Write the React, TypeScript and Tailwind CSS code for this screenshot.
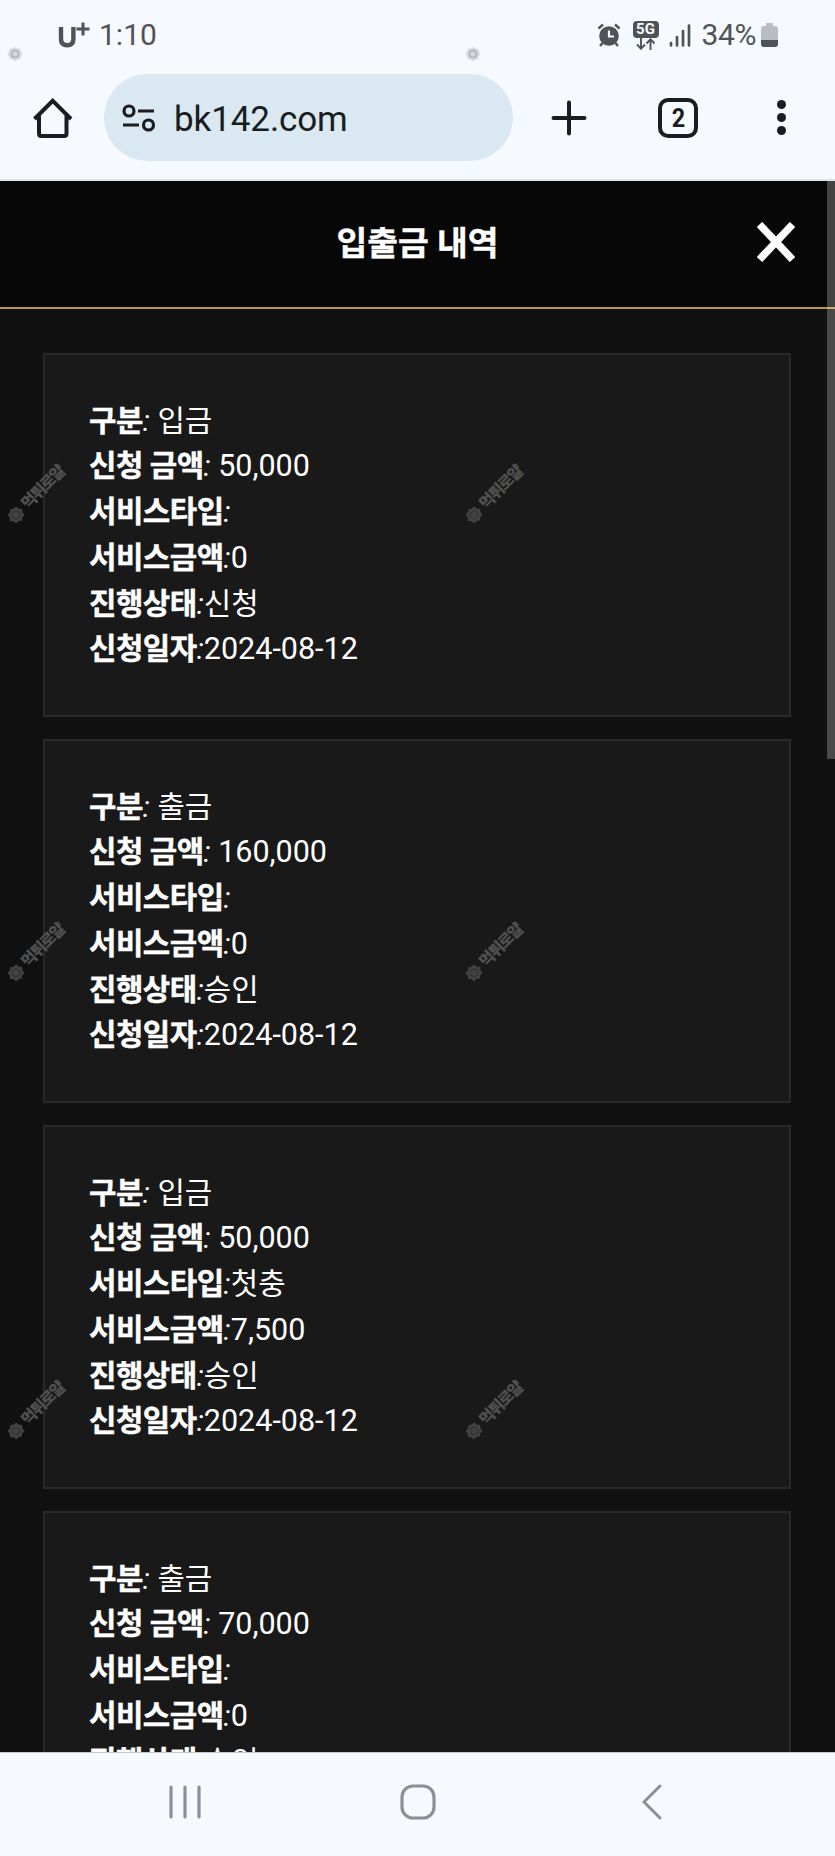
type Record = {
  kind: string;
  amount: string;
  bonusType: string;
  bonusAmount: string;
  status: string;
  date: string;
};

const records: Record[] = [
  { kind: "입금", amount: "50,000", bonusType: "", bonusAmount: "0", status: "신청", date: "2024-08-12" },
  { kind: "출금", amount: "160,000", bonusType: "", bonusAmount: "0", status: "승인", date: "2024-08-12" },
  { kind: "입금", amount: "50,000", bonusType: "첫충", bonusAmount: "7,500", status: "승인", date: "2024-08-12" },
  { kind: "출금", amount: "70,000", bonusType: "", bonusAmount: "0", status: "승인", date: "2024-08-12" },
];

const stamps = [
  "left-[-2px] top-[477px]",
  "left-[456px] top-[477px]",
  "left-[-2px] top-[935px]",
  "left-[456px] top-[935px]",
  "left-[-2px] top-[1393px]",
  "left-[456px] top-[1393px]",
];

function Badge({ className }: { className: string }) {
  return (
    <svg viewBox="0 0 18 18" className={className}>
      <path d="M9 1l2.500 1.800 3.500.2.300 3.300L17.500 9l-2.200 2.700-.3 3.300-3.500.2L9 17l-2.500-1.800L3 15l-.3-3.300L.5 9l2.200-2.700L3 3l3.500-.2z" fill="currentColor" />
      <circle cx="9" cy="9" r="3.800" fill="none" stroke="black" strokeOpacity="0.2" strokeWidth="1.400" />
    </svg>
  );
}

function StatusBar() {
  return (
    <div className="flex h-[70px] items-center justify-between pr-[57px] pl-[58px] text-[#505356]">
      <div className="flex items-center gap-[9px]">
        <svg viewBox="0 0 32 26" className="h-[26px] w-8" fill="none" stroke="currentColor">
          <path d="M3 5v12c0 4 2 6.300 6.200 6.300s6.200-2.300 6.200-6.300V5" strokeWidth="4.400" />
          <path d="M18.500 7h13M25 .5v13" strokeWidth="3" />
        </svg>
        <span className="text-[30px] leading-none">1:10</span>
      </div>
      <div className="flex items-center">
        <svg viewBox="0 0 24 24" className="mr-[12px] h-6 w-6">
          <circle cx="12" cy="13" r="9.800" fill="currentColor" />
          <path d="M1.500 5.500l4.500-4M22.500 5.500l-4.500-4M5.500 20l-2.500 3M18.500 20l2.500 3" stroke="currentColor" strokeWidth="2.400" />
          <path d="M12 7.500v6h5" fill="none" stroke="#f6f9fe" strokeWidth="2.200" />
        </svg>
        <div className="mr-[10px] flex w-[26px] flex-col items-center">
          <span className="h-[17px] w-[26px] rounded-[4px] bg-[#505356] text-center text-[15px] leading-[17px] font-bold text-[#f6f9fe]">5G</span>
          <svg viewBox="0 0 20 12" className="h-3 w-5" fill="none" stroke="currentColor" strokeWidth="1.900">
            <path d="M5 0v10.500M1 6.500l4 4.200 4-4.200M14.500 12V1.500M10.500 5.500l4-4.200 4 4.200" />
          </svg>
        </div>
        <svg viewBox="0 0 22 23" className="mr-[11px] h-[23px] w-[22px]" fill="none" stroke="currentColor" strokeWidth="2.700" strokeLinecap="round">
          <path d="M2 19v2.500M8 13v8.500M14 7v14.500M20 1.500v20" />
        </svg>
        <span className="text-[30px] leading-none tracking-[-0.4px]">34%</span>
        <svg viewBox="0 0 17 24" className="ml-[5px] h-6 w-[17px]">
          <path d="M5 0h7v3h2q3 0 3 3v11H0V6q0-3 3-3h2z" fill="#b9bcc1" />
          <path d="M0 17h17v4q0 3-3 3H3q-3 0-3-3z" fill="currentColor" />
        </svg>
      </div>
    </div>
  );
}

function AddressBar() {
  return (
    <div className="flex h-[95px] items-center text-[#191d20]">
      <svg viewBox="0 0 40 40" className="ml-[33px] h-10 w-10" fill="none" stroke="currentColor" strokeWidth="4" strokeLinejoin="miter">
        <path d="M1.500 21L19.700 2.800 38 21" />
        <path d="M6 17.500v18q0 2.500 2.500 2.500h22.500q2.500 0 2.500-2.500v-18" />
      </svg>
      <div className="ml-[31px] flex h-[87px] w-[409px] items-center rounded-full bg-[#dae8f1] pl-[18px]">
        <svg viewBox="0 0 34 28" className="h-7 w-[34px]" fill="none" stroke="currentColor" strokeWidth="3.200">
          <circle cx="7" cy="7" r="5" />
          <path d="M16 7h16M1 21h16" />
          <circle cx="26.500" cy="21" r="5" />
        </svg>
        <span className="ml-[18px] pt-[3px] text-[35px] leading-none tracking-[-0.1px]">bk142.com</span>
      </div>
      <svg viewBox="0 0 36 36" className="ml-[38px] h-9 w-9" fill="none" stroke="currentColor" strokeWidth="4" strokeLinecap="round">
        <path d="M18 2.500v31M2.500 18h31" />
      </svg>
      <div className="ml-[71px] flex h-10 w-10 items-center justify-center rounded-[10px] border-4 border-current text-[26px] leading-none font-bold">
        <span className="scale-x-90">2</span>
      </div>
      <div className="ml-[79px] flex flex-col gap-1">
        <i className="size-[9px] rounded-full bg-current" />
        <i className="size-[9px] rounded-full bg-current" />
        <i className="size-[9px] rounded-full bg-current" />
      </div>
    </div>
  );
}

function Row({ label, text, number, spaced }: { label: string; text?: string; number?: string; spaced?: boolean }) {
  return (
    <p className="h-[45.8px] whitespace-pre">
      <b className="font-bold tracking-[-0.5px] [-webkit-text-stroke:0.4px_white]">{label}</b>
      <i>:</i>
      {spaced ? " " : ""}
      {text}
      {number && <span className="text-[30.5px]">{number}</span>}
    </p>
  );
}

function RecordCard({ record }: { record: Record }) {
  return (
    <div className="h-[364px] shrink-0 border-2 border-[#292929] bg-[#191919] px-[44px] pt-[42.5px] text-[29.8px] leading-[45.8px] text-white">
      <Row label="구분" text={record.kind} spaced />
      <Row label="신청 금액" number={record.amount} spaced />
      <Row label="서비스타입" text={record.bonusType} />
      <Row label="서비스금액" number={record.bonusAmount} />
      <Row label="진행상태" text={record.status} />
      <Row label="신청일자" number={record.date} />
    </div>
  );
}

export default function App() {
  return (
    <div className="relative flex h-[1856px] w-[835px] flex-col overflow-hidden bg-[#f6f9fe] font-[Roboto,'Noto_Sans_CJK_KR',sans-serif]">
      <header className="h-[181px] shrink-0 border-b-2 border-[#dde3e6]">
        <StatusBar />
        <AddressBar />
      </header>

      <main className="relative h-[1571px] shrink-0 overflow-hidden bg-[#111]">
        <div className="relative flex h-[128px] items-center justify-center border-b-2 border-[#b8974a] bg-[#070707]">
          <h1 className="text-[33.4px] leading-none font-bold text-white [-webkit-text-stroke:0.4px_white]">입출금 내역</h1>
          <svg viewBox="0 0 38 40" className="absolute top-[41px] right-[40px] h-10 w-[38px]" stroke="white" strokeWidth="7.500">
            <path d="M2.500 2.500l33 35M35.500 2.500l-33 35" />
          </svg>
        </div>
        <div className="flex flex-col gap-[22px] pt-[44px] pr-[44px] pl-[43px]">
          {records.map((record, i) => (
            <RecordCard key={i} record={record} />
          ))}
        </div>
        <div className="absolute top-0 right-0 h-[578px] w-2 bg-white/24" />
      </main>

      <nav className="flex h-[104px] items-center border-t border-[#c4c6ca] pb-[5px] text-[#8d9093]">
        <svg viewBox="0 0 32 34" className="ml-[169px] h-[34px] w-8" fill="none" stroke="currentColor" strokeWidth="3.200" strokeLinecap="round">
          <path d="M2 2v30M16 2v30M30 2v30" />
        </svg>
        <svg viewBox="0 0 36 36" className="ml-[199px] h-9 w-9" fill="none" stroke="currentColor" strokeWidth="3.200">
          <rect x="2" y="2" width="32" height="32" rx="11" />
        </svg>
        <svg viewBox="0 0 22 36" className="ml-[205px] h-9 w-[22px]" fill="none" stroke="currentColor" strokeWidth="3" strokeLinecap="round" strokeLinejoin="round">
          <path d="M19 2L3 18l16 16" />
        </svg>
      </nav>

      <Badge className="absolute top-[46px] left-[7px] size-4 text-[#d5d7da]" />
      <Badge className="absolute top-[46px] left-[465px] size-4 text-[#d5d7da]" />
      {stamps.map((pos) => (
        <div key={pos} className={`absolute ${pos} flex h-8 w-20 -rotate-45 items-center gap-[3px]`}>
          <Badge className="size-[18px] shrink-0 text-[#424242]" />
          <span className="text-[16px] leading-none font-black tracking-[-1.5px] whitespace-nowrap text-[#505050]">먹튀로얄</span>
        </div>
      ))}
    </div>
  );
}
